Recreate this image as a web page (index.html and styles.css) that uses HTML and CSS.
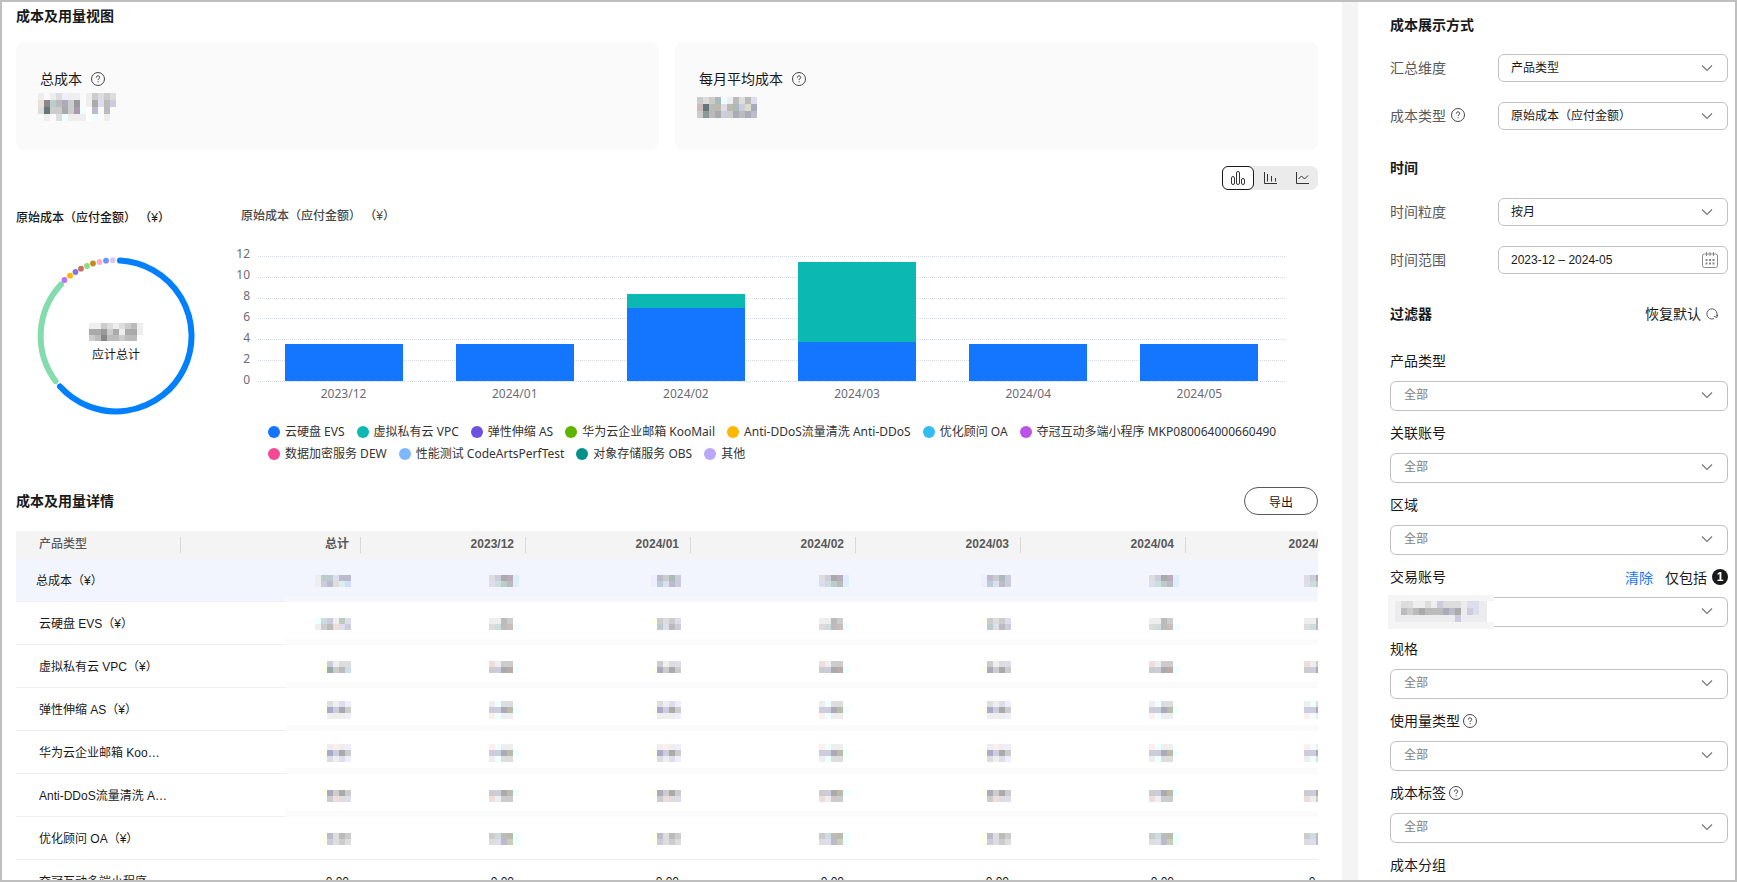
FILE: index.html
```html
<!DOCTYPE html>
<html lang="zh-CN">
<head>
    <meta charset="UTF-8">
    <meta name="viewport" content="width=device-width, initial-scale=1.0">
    <title>成本分析</title>
    <link rel="stylesheet" href="styles.css">
</head>
<body>

    <!-- Shared icons -->
    <svg class="sprite" aria-hidden="true">
        <symbol id="icon-help" viewBox="0 0 14 14">
            <circle cx="7" cy="7" r="6.5" fill="none" stroke="currentColor" stroke-width="0.9"/>
            <path d="M5.3 5.6c0-1 .7-1.7 1.7-1.7s1.7.6 1.7 1.5c0 1.2-1.6 1.3-1.6 2.7" fill="none" stroke="currentColor"/>
            <path d="M6.6 9.2h1v1h-1z" fill="currentColor"/>
        </symbol>
        <symbol id="icon-chevron" viewBox="0 0 12 8">
            <path d="M1 1.5l5 5 5-5" fill="none" stroke="currentColor" stroke-width="1.2"/>
        </symbol>
    </svg>

    <div class="page">

        <main class="content">
            <h2 class="title">成本及用量视图</h2>

            <!-- Summary cards -->
            <div class="cards">
                <div class="card">
                    <div class="card-label">总成本 <svg class="help"><use href="#icon-help"/></svg></div>
                    <div class="card-value"><svg class="mosaic" data-tile="total" data-cell="6,7"></svg></div>
                </div>
                <div class="card">
                    <div class="card-label">每月平均成本 <svg class="help"><use href="#icon-help"/></svg></div>
                    <div class="card-value"><svg class="mosaic" data-tile="average" data-cell="6,7"></svg></div>
                </div>
            </div>

            <!-- Chart type switch -->
            <div class="switch">
                <button class="switch-button active" aria-label="堆叠图">
                    <svg viewBox="0 0 14 14"><rect x="0.5" y="5.5" width="3" height="8" rx="1.5"/><rect x="5.5" y="0.5" width="3" height="13" rx="1.5"/><rect x="10.5" y="7.5" width="3" height="6" rx="1.5"/></svg>
                </button>
                <button class="switch-button" aria-label="柱状图">
                    <svg viewBox="0 0 14 14"><path d="M1.5 1v11.5h12.5M4.5 3v7.5M8.5 5v5.5M12.5 7v3.5"/></svg>
                </button>
                <button class="switch-button" aria-label="折线图">
                    <svg viewBox="0 0 14 14"><path d="M1.5 1v11.5h12.5M3.5 8l3-3 3 3 3.5-3.5"/></svg>
                </button>
            </div>

            <!-- Charts -->
            <div class="charts">
                <section class="donut-panel">
                    <h3 class="chart-title">原始成本（应付金额） （¥）</h3>
                    <div class="donut">
                        <svg class="donut-ring" viewBox="0 0 160 160">
                            <path d="M84 4.5A75.500 75.500 0 1 1 24 130.5" stroke="#0080ff"/>
                            <path d="M19.5 125A75.500 75.500 0 0 1 25 28.5" stroke="#84dcae"/>
                            <g>
                                <circle cx="28.5" cy="24" r="2.9" fill="#b974f0"/>
                                <circle cx="34" cy="19.7" r="2.9" fill="#fcb900"/>
                                <circle cx="39.5" cy="16" r="2.9" fill="#8078dc"/>
                                <circle cx="45" cy="12.7" r="2.9" fill="#cc6f63"/>
                                <circle cx="51" cy="10" r="2.9" fill="#92da7c"/>
                                <circle cx="57" cy="7.5" r="2.9" fill="#bf8c22"/>
                                <circle cx="63.5" cy="6" r="2.9" fill="#ffadc9"/>
                                <circle cx="70" cy="4.7" r="2.9" fill="#6b93ff"/>
                                <circle cx="76.7" cy="4.2" r="2.9" fill="#dac4ff"/>
                            </g>
                        </svg>
                        <div class="donut-label">
                            <svg class="mosaic" data-tile="donut" data-cell="6,6"></svg>
                            <span>应计总计</span>
                        </div>
                    </div>
                </section>

                <section class="bar-panel">
                    <h3 class="chart-title">原始成本（应付金额） （¥）</h3>
                    <div class="bar-chart">
                        <div class="y-axis">
                            <span>12</span><span>10</span><span>8</span><span>6</span><span>4</span><span>2</span><span>0</span>
                        </div>
                        <div class="plot">
                            <div class="grid-lines"><i></i><i></i><i></i><i></i><i></i><i></i><i></i></div>
                            <div class="bars">
                                <div class="bar"><div class="evs" style="height: 29.5%"></div></div>
                                <div class="bar"><div class="evs" style="height: 29.5%"></div></div>
                                <div class="bar"><div class="vpc" style="height: 11.2%"></div><div class="evs" style="height: 58.5%"></div></div>
                                <div class="bar"><div class="vpc" style="height: 64.5%"></div><div class="evs" style="height: 30.9%"></div></div>
                                <div class="bar"><div class="evs" style="height: 29.5%"></div></div>
                                <div class="bar"><div class="evs" style="height: 29.5%"></div></div>
                            </div>
                        </div>
                        <div class="x-axis">
                            <span>2023/12</span><span>2024/01</span><span>2024/02</span><span>2024/03</span><span>2024/04</span><span>2024/05</span>
                        </div>
                    </div>
                    <ul class="legend">
                        <li class="c-evs">云硬盘 EVS</li>
                        <li class="c-vpc">虚拟私有云 VPC</li>
                        <li class="c-as">弹性伸缩 AS</li>
                        <li class="c-mail">华为云企业邮箱 KooMail</li>
                        <li class="c-ddos">Anti-DDoS流量清洗 Anti-DDoS</li>
                        <li class="c-oa">优化顾问 OA</li>
                        <li class="c-mkp">夺冠互动多端小程序 MKP080064000660490</li>
                        <li class="c-dew">数据加密服务 DEW</li>
                        <li class="c-perf">性能测试 CodeArtsPerfTest</li>
                        <li class="c-obs">对象存储服务 OBS</li>
                        <li class="c-other">其他</li>
                    </ul>
                </section>
            </div>

            <!-- Detail table -->
            <div class="details-header">
                <h2 class="title">成本及用量详情</h2>
                <button class="export">导出</button>
            </div>
            <div class="table-wrap">
                <table>
                    <colgroup><col class="col"><col class="col-total"><col class="col" span="5"><col class="col-last"></colgroup>
                    <thead>
                        <tr>
                            <th>产品类型</th>
                            <th>总计</th>
                            <th>2023/12</th>
                            <th>2024/01</th>
                            <th>2024/02</th>
                            <th>2024/03</th>
                            <th>2024/04</th>
                            <th>2024/05</th>
                        </tr>
                    </thead>
                    <tbody id="rows"></tbody>
                </table>
            </div>
        </main>

        <aside class="sidebar">
            <h2 class="title">成本展示方式</h2>
            <div class="field">
                <label for="dimension">汇总维度</label>
                <div class="select">
                    <select id="dimension"><option>产品类型</option></select>
                    <svg class="chevron"><use href="#icon-chevron"/></svg>
                </div>
            </div>
            <div class="field">
                <label for="cost-type">成本类型 <svg class="help"><use href="#icon-help"/></svg></label>
                <div class="select">
                    <select id="cost-type"><option>原始成本（应付金额）</option></select>
                    <svg class="chevron"><use href="#icon-chevron"/></svg>
                </div>
            </div>

            <h2 class="title section">时间</h2>
            <div class="field">
                <label for="granularity">时间粒度</label>
                <div class="select">
                    <select id="granularity"><option>按月</option></select>
                    <svg class="chevron"><use href="#icon-chevron"/></svg>
                </div>
            </div>
            <div class="field">
                <label for="range">时间范围</label>
                <div class="select">
                    <input type="text" id="range" value="2023-12 – 2024-05">
                    <svg class="calendar" viewBox="0 0 16 16">
                        <rect x="0.5" y="2" width="15" height="13.5" rx="2"/>
                        <path d="M4.5 0v4M8 0v4M11.5 0v4"/>
                        <path d="M3.5 8h2M7 8h2M10.5 8h2M3.5 11.5h2M7 11.5h2M10.5 11.5h2" stroke-width="2"/>
                    </svg>
                </div>
            </div>

            <div class="filter-header">
                <h2 class="title">过滤器</h2>
                <button class="reset">恢复默认
                    <svg viewBox="0 0 12 12"><path d="M8 10.6A5.100 5.100 0 1 1 10.6 8M7.8 8.3l3 1.200 1-3"/></svg>
                </button>
            </div>

            <div class="filter">
                <div class="filter-label"><label for="f-product">产品类型</label></div>
                <div class="select">
                    <select id="f-product"><option>全部</option></select>
                    <svg class="chevron"><use href="#icon-chevron"/></svg>
                </div>
            </div>
            <div class="filter">
                <div class="filter-label"><label for="f-linked">关联账号</label></div>
                <div class="select">
                    <select id="f-linked"><option>全部</option></select>
                    <svg class="chevron"><use href="#icon-chevron"/></svg>
                </div>
            </div>
            <div class="filter">
                <div class="filter-label"><label for="f-region">区域</label></div>
                <div class="select">
                    <select id="f-region"><option>全部</option></select>
                    <svg class="chevron"><use href="#icon-chevron"/></svg>
                </div>
            </div>
            <div class="filter">
                <div class="filter-label">
                    <label for="f-account">交易账号</label>
                    <span class="filter-actions"><a href="#">清除</a><span>仅包括</span><b class="count">1</b></span>
                </div>
                <div class="select">
                    <select id="f-account"><option></option></select>
                    <svg class="chevron"><use href="#icon-chevron"/></svg>
                    <svg class="mask" viewBox="0 0 106 34">
                        <path d="M0 0h106v34H0z" fill="#f5f5f5"/>
                        <path d="M7 6h92v21H7z" fill="#ececee"/>
                        <path d="M99 6h7v21h-7z" fill="#fff"/>
                        <g data-tile="account" data-cell="6,7" transform="translate(13 6)"></g>
                    </svg>
                </div>
            </div>
            <div class="filter">
                <div class="filter-label"><label for="f-spec">规格</label></div>
                <div class="select">
                    <select id="f-spec"><option>全部</option></select>
                    <svg class="chevron"><use href="#icon-chevron"/></svg>
                </div>
            </div>
            <div class="filter">
                <div class="filter-label"><label for="f-usage">使用量类型</label><svg class="help"><use href="#icon-help"/></svg></div>
                <div class="select">
                    <select id="f-usage"><option>全部</option></select>
                    <svg class="chevron"><use href="#icon-chevron"/></svg>
                </div>
            </div>
            <div class="filter">
                <div class="filter-label"><label for="f-tag">成本标签</label><svg class="help"><use href="#icon-help"/></svg></div>
                <div class="select">
                    <select id="f-tag"><option>全部</option></select>
                    <svg class="chevron"><use href="#icon-chevron"/></svg>
                </div>
            </div>
            <div class="filter">
                <div class="filter-label"><label for="f-group">成本分组</label></div>
                <div class="select">
                    <select id="f-group"><option>全部</option></select>
                    <svg class="chevron"><use href="#icon-chevron"/></svg>
                </div>
            </div>
        </aside>

    </div>

    <script src="script.js"></script>
</body>
</html>
```
FILE: styles.css
```css
/* --- Base --- */
* {
    box-sizing: border-box;
}

body {
    margin: 0;
    font-family: "Liberation Sans", "Noto Sans CJK SC", sans-serif;
    font-size: 12px;
    color: #191919;
    background-color: white;
}

button, select, input {
    font: inherit;
    color: inherit;
}

.sprite {
    display: none;
}

.page {
    display: flex;
    height: 100vh;
    overflow: hidden;
    border: 2px solid #bfbfbf;
}

.title {
    margin: 0;
    font-size: 14px;
    font-weight: 700;
    line-height: 20px;
}

.help {
    width: 14px;
    height: 14px;
    color: #333;
}

/* --- Main column --- */
.content {
    flex: 1;
    min-width: 0;
    padding: 4px 24px 0 14px;
    overflow: hidden;
}

.cards {
    display: grid;
    grid-template-columns: 1fr 1fr;
    gap: 16px;
    margin-top: 16px;
}

.card {
    padding: 26px 24px 29px;
    border-radius: 8px;
    background-color: #fafafa;
}

.card-label {
    display: flex;
    align-items: center;
    gap: 9px;
    font-size: 14px;
    line-height: 22px;
}

.card-value {
    display: flex;
    align-items: center;
    height: 28px;
    margin: 3px 0 0 -2px;
}

/* --- Chart type switch --- */
.switch {
    display: flex;
    width: max-content;
    margin: 16px 0 0 auto;
    border-radius: 7px;
    background-color: #ebebeb;
}

.switch-button {
    display: flex;
    align-items: center;
    justify-content: center;
    width: 32px;
    height: 24px;
    padding: 0;
    border: 1px solid transparent;
    border-radius: 6px;
    background: none;
}

.switch-button.active {
    border-color: #191919;
    background-color: white;
}

.switch-button svg {
    width: 14px;
    height: 14px;
    fill: none;
    stroke: #333;
}

/* --- Charts --- */
.charts {
    display: flex;
    margin-top: 16px;
}

.chart-title {
    margin: 0;
    font-size: 12px;
    font-weight: 500;
    line-height: 20px;
}

.donut-panel {
    width: 216px;
    padding-top: 2px;
}

.donut {
    display: grid;
    width: 160px;
    margin: 28px 0 0 20px;
}

.donut-ring,
.donut-label {
    grid-area: 1 / 1;
}

.donut-ring {
    width: 160px;
    height: 160px;
}

.donut-ring path {
    fill: none;
    stroke-width: 6;
    stroke-linecap: round;
}

.donut-label {
    display: flex;
    flex-direction: column;
    align-items: center;
    justify-content: center;
    gap: 4px;
    padding-top: 16px;
    line-height: 20px;
}

.bar-panel {
    flex: 1;
    min-width: 0;
}

.bar-panel .chart-title {
    padding-left: 9px;
    color: #4a4a4a;
}

.bar-chart {
    display: grid;
    grid-template-columns: 18px 1fr;
    column-gap: 8px;
    margin-top: 20px;
    padding-right: 33px;
    font-family: "Noto Sans", "Noto Sans CJK SC", sans-serif;
    color: #6b6c75;
}

.y-axis {
    display: flex;
    flex-direction: column;
    justify-content: space-between;
    height: 142px;
    line-height: 16px;
    text-align: right;
}

.plot {
    display: grid;
    height: 126px;
    margin-top: 10px;
}

.grid-lines,
.bars {
    grid-area: 1 / 1;
}

.grid-lines {
    display: flex;
    flex-direction: column;
    justify-content: space-between;
}

.grid-lines i {
    border-top: 1px dotted #d3dcea;
}

.bars,
.x-axis {
    display: grid;
    grid-template-columns: repeat(6, 1fr);
}

.bar {
    display: flex;
    flex-direction: column;
    justify-content: flex-end;
    width: 69%;
    margin: 0 auto;
    padding-bottom: 1px;
}

.evs {
    background-color: #1476ff;
}

.vpc {
    background-color: #0bb8b2;
}

.x-axis {
    grid-column: 2;
    margin-top: -4px;
    line-height: 20px;
    text-align: center;
}

.legend {
    display: flex;
    flex-wrap: wrap;
    column-gap: 12px;
    margin: 17px 0 0 36px;
    padding: 0;
    list-style: none;
    font-family: "Noto Sans", "Noto Sans CJK SC", sans-serif;
    line-height: 22px;
    color: #333;
}

.legend li {
    display: flex;
    align-items: center;
    gap: 5px;
}

.legend li::before {
    content: "";
    width: 12px;
    height: 12px;
    border-radius: 50%;
    background-color: currentColor;
}

.c-evs::before { color: #1476ff; }
.c-vpc::before { color: #0bb8b2; }
.c-as::before { color: #6f51e0; }
.c-mail::before { color: #5cb300; }
.c-ddos::before { color: #ffb700; }
.c-oa::before { color: #33bcf2; }
.c-mkp::before { color: #ba53e6; }
.c-dew::before { color: #f54996; }
.c-perf::before { color: #7eb7fc; }
.c-obs::before { color: #058f89; }
.c-other::before { color: #b9a7f9; }

/* --- Detail table --- */
.details-header {
    display: flex;
    align-items: center;
    justify-content: space-between;
    margin-top: 22px;
}

.export {
    width: 74px;
    height: 28px;
    padding: 0;
    border: 1px solid #595959;
    border-radius: 14px;
    background-color: white;
}

.table-wrap {
    margin-top: 16px;
    overflow: hidden;
}

table {
    width: 1328px;
    table-layout: fixed;
    border-collapse: collapse;
}

.col {
    width: 165px;
}

.col-total {
    width: 180px;
}

.col-last {
    width: 158px;
}

th {
    height: 28px;
    padding: 0 12px 2px;
    font-weight: 700;
    line-height: 20px;
    text-align: right;
    color: #595959;
    background: linear-gradient(#d9d9d9, #d9d9d9) no-repeat right 6px / 1px 16px #f4f4f4;
}

td {
    height: 43px;
    padding: 0 12px 0 0;
    line-height: 20px;
    text-align: right;
}

th:first-child,
td:first-child {
    padding-left: 23px;
    font-weight: 500;
    text-align: left;
}

td:first-child {
    overflow: hidden;
    font-weight: 400;
    text-overflow: ellipsis;
    white-space: nowrap;
}

/* Solid rule under the name column, soft band under the masked values */
tbody tr {
    background-image: linear-gradient(#eee, #eee), linear-gradient(#fbfbfb, #fbfbfb);
    background-position: left bottom, right bottom;
    background-repeat: no-repeat;
    background-size: 269px 1px, calc(100% - 269px) 6px;
}

tbody tr:nth-child(7) {
    background-size: 100% 1px, 0 0;
}

tbody tr:first-child {
    background-color: #f2f5fd;
    background-image: linear-gradient(#eee, #eee), linear-gradient(#f5f7fc, #f5f7fc);
}

tbody tr:first-child td:first-child {
    padding-left: 20px;
}

td .mosaic {
    display: block;
    margin: 0 -2px 0 auto;
}

td:nth-child(odd) .mosaic {
    margin-right: -5px;
}

/* --- Sidebar --- */
.sidebar {
    flex: none;
    width: 393px;
    padding: 13px 7px 0 32px;
    border-left: 16px solid #f4f4f4;
    overflow: hidden;
}

.field {
    display: flex;
    align-items: center;
    height: 28px;
    margin-top: 20px;
}

.title + .field {
    margin-top: 19px;
}

.field label {
    display: flex;
    align-items: center;
    gap: 5px;
    width: 108px;
    padding-bottom: 2px;
    font-size: 14px;
    color: #595959;
}

.title.section {
    margin-top: 28px;
}

.section + .field {
    margin-top: 20px;
}

.select {
    position: relative;
    flex: 1;
}

.select select,
.select input {
    display: block;
    width: 100%;
    height: 28px;
    padding: 0 40px 1px 12px;
    border: 1px solid #c2c2c2;
    border-radius: 6px;
    outline: none;
    appearance: none;
    background-color: white;
}

.filter .select select {
    height: 30px;
    padding: 0 40px 2px 13px;
    color: #808080;
}

.chevron {
    position: absolute;
    top: 10px;
    right: 15px;
    width: 12px;
    height: 8px;
    color: #777;
    pointer-events: none;
}

.calendar {
    position: absolute;
    top: 6px;
    right: 10px;
    width: 16px;
    height: 16px;
    fill: none;
    stroke: #8a8a8a;
    pointer-events: none;
}

.filter-header {
    display: flex;
    align-items: center;
    justify-content: space-between;
    margin-top: 30px;
    padding-right: 10px;
}

.reset {
    display: flex;
    align-items: center;
    gap: 5px;
    padding: 0;
    border: none;
    background: none;
    font-size: 14px;
    line-height: 20px;
}

.reset svg {
    width: 12px;
    height: 12px;
    fill: none;
    stroke: #595959;
}

.filter {
    margin-top: 12px;
}

.filter-header + .filter {
    margin-top: 27px;
}

.filter-label {
    display: flex;
    align-items: center;
    gap: 3px;
    height: 20px;
    margin-bottom: 10px;
    font-size: 14px;
}

.filter-label label {
    padding-bottom: 2px;
}

.filter-actions {
    display: flex;
    align-items: center;
    gap: 5px;
    margin-left: auto;
}

.filter-actions a {
    margin-right: 7px;
    color: #1476ff;
    text-decoration: none;
}

.count {
    width: 16px;
    border-radius: 8px;
    background-color: #191919;
    color: white;
    font-size: 12px;
    line-height: 16px;
    text-align: center;
}

/* Pixelated account name lies over the select */
.mask {
    position: absolute;
    top: -2px;
    left: -2px;
    width: 106px;
    height: 34px;
    pointer-events: none;
}
```
FILE: script.js
```javascript
// Pixel tiles: one string per line, three hex digits per cell, "..." leaves a cell empty
const tiles = {
    total: [
        'eee ... eee ddd eef eee eee ... eee ccc ddd ccc ddd',
        'edd 888 bcc bbb aab ccc 999 ... eee aaa dde bbb ccd',
        'ddd 677 ccc ccc aaa ccc a9a eff fff bbc ... bbb ...',
        '... eee ... ddd eff eee eee eee fff eff ... eee ...'
    ],
    average: [
        'ccc ddd ccc abb eff eee bbb ddd bbb dde',
        'cbb 677 bbb bba dde bba abb ccd ddc aab',
        'ccc 899 bbb aaa ccd ccc aab bbb aab bbc'
    ],
    donut: [
        'eee eee ccc ddd eee ddd ccc bbb eee',
        'aaa aaa 999 ccc aaa eee aaa aaa eee',
        'ccc bbb 888 bbb bbb ccc bbb bbb ...'
    ],
    account: [
        'ddd ddd eee eee ddd eee ccd ddd ddd ddd ... dde dde',
        'bbb ccc bbb aaa bbb bbb bbb aab bbc aaa ... ccd dde',
        '... ... ... ... ... ... ... ... ... ccd ... ... ...'
    ],
    t1: ['eee bcc bcc dde bbc bbc', 'eee ccd bbc ddd dee cdf'],
    t2: ['eff cdd ccd eee bcb dde', 'eee ccc bbb edd dde ccd'],
    t3: ['ffe ccd eee ddd ddd', 'ffe 9aa ccc bbb cde'],
    a1: ['ddd ccd aaa bab def', 'dde cdd bcc bbb def'],
    a2: ['eee eee bbb ccc fff', 'ddd cdd bbb cbb eff'],
    a3: ['edd eee ccc ccc fff', 'ccc ccd aaa baa eff'],
    a4: ['eee eff ddd ddd ...', 'ccd ccd aab bba eff', 'fee eff eee eee ...'],
    a5: ['fee eff eee eee ...', 'ccd ccd aab bba eff', 'eee eff ddd ddd ...'],
    a6: ['ccc ccd aaa bba eff', 'edd eee ccc ccc fff'],
    a7: ['ccc cdd bbb bba eff', 'ddd dde bbc ccb eff'],
    b1: ['eef bbc ccc abb ccd', 'eef bcd dde bbc ccd'],
    b2: ['ffe ccc ddd ccc dde', 'fff bcc dde bbb ccd'],
    b3: ['... ccc eee ddd dde', 'ffe aab ccc aaa ccc'],
    b4: ['... ddd eee dde eef', 'ffe aac ccd aaa ccc', '... eee eee eee eef'],
    b5: ['... eee fee eee eef', 'ffe aac ccd aaa ccc', '... ddd eee dde eef'],
    b6: ['ffe aab ccc aaa ccc', '... ccc edd ddd dde'],
    b7: ['ffe bbc ddd bbb ccc', 'ffe ccd ddd ccc ddd']
};

const rows = [
    ['总成本（¥）', 't1', 'a1', 'b1', 'a1', 'b1', 'a1', 'a1'],
    ['云硬盘 EVS（¥）', 't2', 'a2', 'b2', 'a2', 'b2', 'a2', 'a2'],
    ['虚拟私有云 VPC（¥）', 't3', 'a3', 'b3', 'a3', 'b3', 'a3', 'a3'],
    ['弹性伸缩 AS（¥）', 'b4', 'a4', 'b4', 'a4', 'b4', 'a4', 'a4'],
    ['华为云企业邮箱 KooMail（¥）', 'b5', 'a5', 'b5', 'a5', 'b5', 'a5', 'a5'],
    ['Anti-DDoS流量清洗 Anti-DDoS（¥）', 'b6', 'a6', 'b6', 'a6', 'b6', 'a6', 'a6'],
    ['优化顾问 OA（¥）', 'b7', 'a7', 'b7', 'a7', 'b7', 'a7', 'a7'],
    ['夺冠互动多端小程序 MKP080064000660490（¥）', '0.00', '0.00', '0.00', '0.00', '0.00', '0.00', '0.00']
];

document.querySelector('#rows').innerHTML = rows.map(([name, ...cells]) => {
    const values = cells.map((cell) => {
        return tiles[cell] ? `<td><svg class="mosaic" data-tile="${cell}" data-cell="6,6"></svg></td>` : `<td>${cell}</td>`;
    });
    return `<tr><td>${name}</td>${values.join('')}</tr>`;
}).join('');

document.querySelectorAll('[data-tile]').forEach((el) => {
    const lines = tiles[el.dataset.tile].map((line) => line.split(' '));
    const [w, h] = el.dataset.cell.split(',').map(Number);
    let shapes = '';
    lines.forEach((line, y) => {
        line.forEach((color, x) => {
            if (color !== '...') {
                shapes += `<rect x="${x * w}" y="${y * h}" width="${w}" height="${h}" fill="#${color}"/>`;
            }
        });
    });
    el.innerHTML = shapes;
    if (el.tagName === 'svg') {
        el.setAttribute('width', lines[0].length * w);
        el.setAttribute('height', lines.length * h);
        el.setAttribute('shape-rendering', 'crispEdges');
    }
});
```
